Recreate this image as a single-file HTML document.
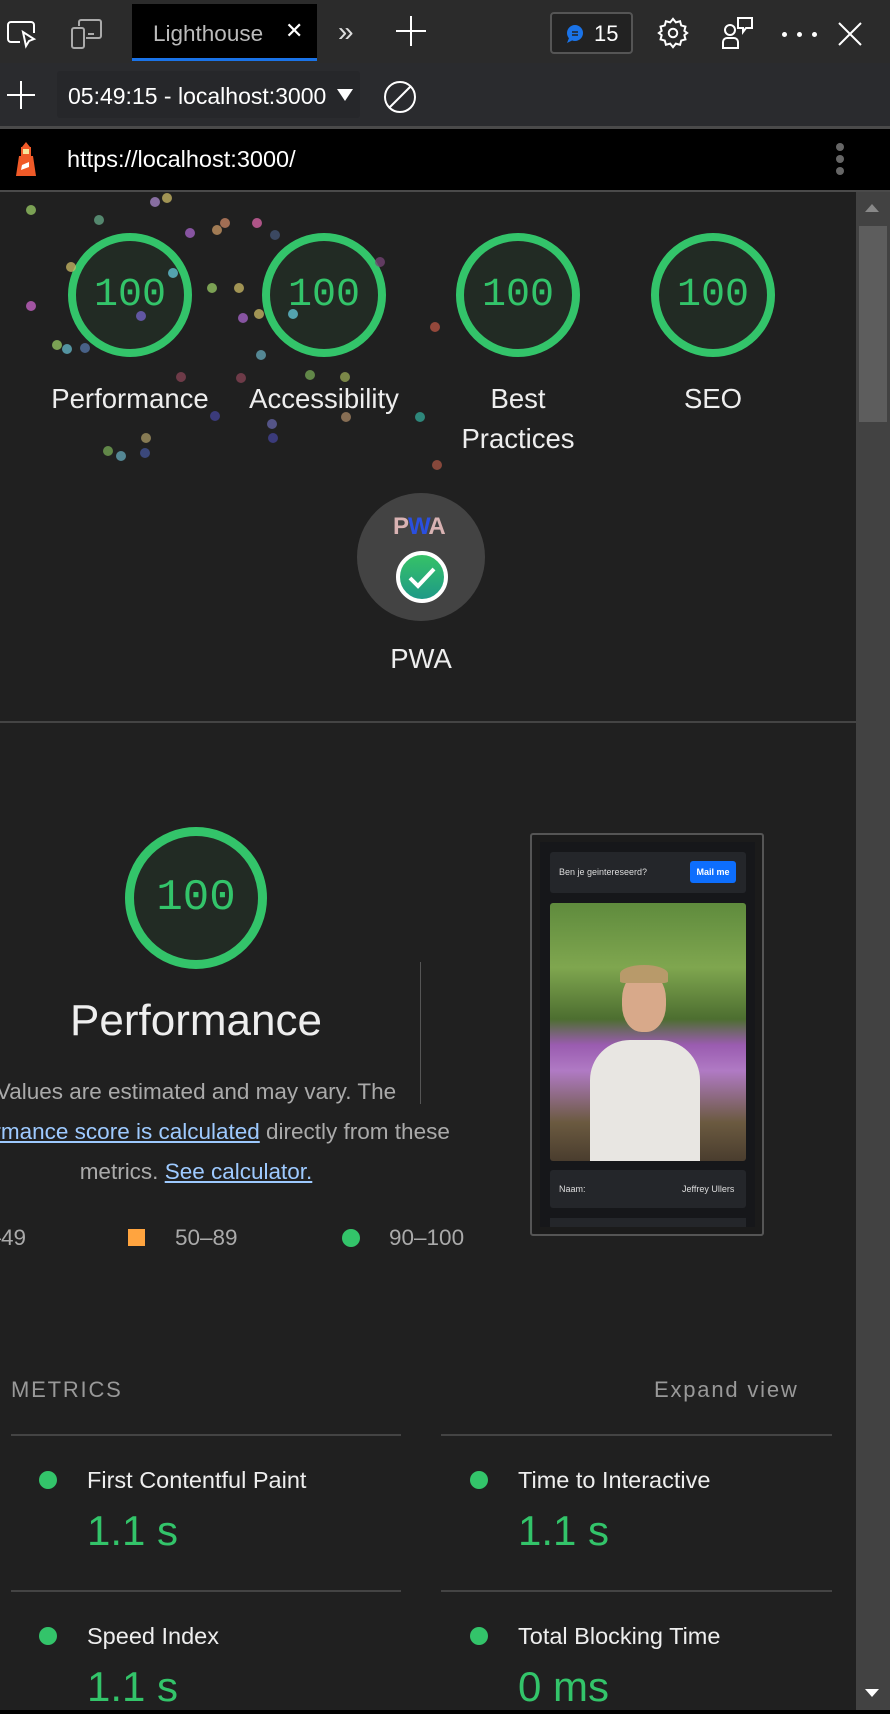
<!DOCTYPE html>
<html><head><meta charset="utf-8"><style>
*{margin:0;padding:0;box-sizing:border-box}
body{width:890px;height:1714px;background:#202020;font-family:"Liberation Sans",sans-serif;color:#fff;position:relative;overflow:hidden}
.a{position:absolute}
.lbl{position:absolute;font-size:27.5px;color:#eee;text-align:center;width:200px;line-height:40px}
.g{position:absolute;width:124px;height:124px;border:8px solid #33c46a;border-radius:50%;background:#222b24;color:#33c46a;font-family:"Liberation Mono",monospace;font-size:40px;display:flex;align-items:center;justify-content:center}
.dot{position:absolute;width:10px;height:10px;border-radius:50%;opacity:.75}
.ml{position:absolute;font-size:23.5px;color:#eee}
.mv{position:absolute;font-size:42px;color:#33c46a}
.md{position:absolute;width:18px;height:18px;border-radius:50%;background:#33c46a}
.hl{position:absolute;height:2px;background:#444}
</style></head><body>
<div class="a" style="left:0;top:0;width:890px;height:63px;background:#2b2b2b"></div>
<svg class="a" style="left:6px;top:20px" width="34" height="30" viewBox="0 0 34 30" fill="none" stroke="#fff" stroke-width="2"><path d="M14 22H5a3 3 0 0 1-3-3V5a3 3 0 0 1 3-3h20a3 3 0 0 1 3 3v8"/><path d="M17 12l3 14 3-5 5-2z"/></svg>
<svg class="a" style="left:70px;top:18px" width="36" height="34" viewBox="0 0 36 34" fill="none" stroke="#aaa" stroke-width="2"><rect x="2" y="10" width="12" height="20" rx="2"/><path d="M9 8V4a2 2 0 0 1 2-2h18a2 2 0 0 1 2 2v14a2 2 0 0 1-2 2h-13"/><path d="M18 16h6"/></svg>
<div class="a" style="left:132px;top:4px;width:185px;height:57px;background:#000"></div>
<div class="a" style="left:132px;top:58px;width:185px;height:3px;background:#1a73e8"></div>
<div class="a" style="left:153px;top:21px;font-size:22.5px;color:#bbb">Lighthouse</div>
<div class="a" style="left:285px;top:18px;font-size:22px;color:#fff">✕</div>
<div class="a" style="left:338px;top:16px;font-size:28px;color:#ddd">»</div>
<svg class="a" style="left:396px;top:16px" width="30" height="30"><path d="M15 0v30M0 15h30" stroke="#fff" stroke-width="2"/></svg>
<div class="a" style="left:550px;top:12px;width:83px;height:42px;border:2px solid #555;border-radius:4px;background:#222"></div>
<svg class="a" style="left:565px;top:24px" width="20" height="20"><circle cx="10" cy="9" r="8" fill="#1a73e8"/><path d="M4 14l-2 5 6-3z" fill="#1a73e8"/><path d="M7 8h6M7 11h6" stroke="#222" stroke-width="1.5"/></svg>
<div class="a" style="left:594px;top:21px;font-size:22px">15</div>
<svg class="a" style="left:656px;top:16px" width="34" height="34" viewBox="0 0 24 24" fill="none" stroke="#fff" stroke-width="1.4"><circle cx="12" cy="12" r="3"/><path d="M12 2l2 2.5 3-.8.8 3 3 .8-.8 3L22 12l-2 1.5.8 3-3 .8-.8 3-3-.8L12 22l-2-2.5-3 .8-.8-3-3-.8.8-3L2 12l2-1.5-.8-3 3-.8.8-3 3 .8z"/></svg>
<svg class="a" style="left:720px;top:16px" width="36" height="36" viewBox="0 0 36 36" fill="none" stroke="#fff" stroke-width="2"><circle cx="10" cy="14" r="5"/><path d="M3 32v-6a4 4 0 0 1 4-4h7a4 4 0 0 1 4 4v6z"/><path d="M18 2h14v10h-6l-3 4v-4h-5z"/></svg>
<div class="a" style="left:782px;top:32px;width:5px;height:5px;border-radius:50%;background:#fff"></div>
<div class="a" style="left:797px;top:32px;width:5px;height:5px;border-radius:50%;background:#fff"></div>
<div class="a" style="left:812px;top:32px;width:5px;height:5px;border-radius:50%;background:#fff"></div>
<svg class="a" style="left:838px;top:22px" width="24" height="24"><path d="M1 1l22 22M23 1L1 23" stroke="#fff" stroke-width="2"/></svg>
<div class="a" style="left:0;top:63px;width:890px;height:64px;background:#2a2b2e"></div>
<svg class="a" style="left:7px;top:81px" width="28" height="28"><path d="M14 0v28M0 14h28" stroke="#fff" stroke-width="2"/></svg>
<div class="a" style="left:57px;top:71px;width:303px;height:47px;background:#26272a;border-radius:3px"></div>
<div class="a" style="left:68px;top:83px;font-size:23px">05:49:15 - localhost:3000</div>
<div class="a" style="left:337px;top:89px;width:0;height:0;border-left:8px solid transparent;border-right:8px solid transparent;border-top:12px solid #fff"></div>
<svg class="a" style="left:383px;top:80px" width="34" height="34"><circle cx="17" cy="17" r="15" fill="none" stroke="#fff" stroke-width="2"/><path d="M7 27L27 7" stroke="#fff" stroke-width="2"/></svg>
<div class="a" style="left:0;top:126px;width:890px;height:3px;background:#4a4a4a"></div>
<div class="a" style="left:0;top:129px;width:890px;height:61px;background:#000"></div>
<svg class="a" style="left:13px;top:141px" width="26" height="36" viewBox="0 0 26 36"><path d="M13 1l4 5H9z" fill="#f05a28"/><rect x="8" y="6" width="10" height="9" fill="#f05a28"/><rect x="10" y="8" width="6" height="5" fill="#f7e59a"/><path d="M6 15h14l3 20H3z" fill="#f05a28"/><path d="M9 24l7-3v5l-8 3z" fill="#fff"/></svg>
<div class="a" style="left:67px;top:146px;font-size:23.5px">https://localhost:3000/</div>
<div class="a" style="left:836px;top:143px;width:8px;height:8px;border-radius:50%;background:#666"></div>
<div class="a" style="left:836px;top:155px;width:8px;height:8px;border-radius:50%;background:#666"></div>
<div class="a" style="left:836px;top:167px;width:8px;height:8px;border-radius:50%;background:#666"></div>
<div class="a" style="left:0;top:190px;width:890px;height:2px;background:#4a4a4a"></div>
<div class="a" style="left:856px;top:192px;width:34px;height:1518px;background:#424242"></div>
<div class="a" style="left:859px;top:226px;width:28px;height:196px;background:#5d5d5d"></div>
<div class="a" style="left:865px;top:204px;border-left:7px solid transparent;border-right:7px solid transparent;border-bottom:8px solid #888"></div>
<div class="a" style="left:865px;top:1689px;border-left:7px solid transparent;border-right:7px solid transparent;border-top:8px solid #fff"></div>
<div class="a" style="left:0;top:1710px;width:890px;height:4px;background:#000"></div>
<div class="g" style="left:68px;top:233px">100</div>
<div class="g" style="left:262px;top:233px">100</div>
<div class="g" style="left:456px;top:233px">100</div>
<div class="g" style="left:651px;top:233px">100</div>
<div class="lbl" style="left:30px;top:379px">Performance</div>
<div class="lbl" style="left:224px;top:379px">Accessibility</div>
<div class="lbl" style="left:418px;top:379px">Best<br>Practices</div>
<div class="lbl" style="left:613px;top:379px">SEO</div>
<div class="dot" style="left:26px;top:205px;background:#9c6"></div>
<div class="dot" style="left:94px;top:215px;background:#6a8"></div>
<div class="dot" style="left:150px;top:197px;background:#a8c"></div>
<div class="dot" style="left:162px;top:193px;background:#cb6"></div>
<div class="dot" style="left:185px;top:228px;background:#a6c"></div>
<div class="dot" style="left:212px;top:225px;background:#c96"></div>
<div class="dot" style="left:220px;top:218px;background:#c86"></div>
<div class="dot" style="left:252px;top:218px;background:#d6a"></div>
<div class="dot" style="left:270px;top:230px;background:#457"></div>
<div class="dot" style="left:66px;top:262px;background:#cb6"></div>
<div class="dot" style="left:168px;top:268px;background:#6cd"></div>
<div class="dot" style="left:207px;top:283px;background:#9c6"></div>
<div class="dot" style="left:234px;top:283px;background:#cb6"></div>
<div class="dot" style="left:26px;top:301px;background:#c6c"></div>
<div class="dot" style="left:136px;top:311px;background:#76c"></div>
<div class="dot" style="left:238px;top:313px;background:#a6c"></div>
<div class="dot" style="left:254px;top:309px;background:#cb6"></div>
<div class="dot" style="left:288px;top:309px;background:#6cd"></div>
<div class="dot" style="left:375px;top:257px;background:#747"></div>
<div class="dot" style="left:52px;top:340px;background:#9c6"></div>
<div class="dot" style="left:62px;top:344px;background:#6bc"></div>
<div class="dot" style="left:80px;top:343px;background:#57a"></div>
<div class="dot" style="left:430px;top:322px;background:#b54"></div>
<div class="dot" style="left:256px;top:350px;background:#6ab"></div>
<div class="dot" style="left:176px;top:372px;background:#845"></div>
<div class="dot" style="left:236px;top:373px;background:#845"></div>
<div class="dot" style="left:305px;top:370px;background:#7a5"></div>
<div class="dot" style="left:340px;top:372px;background:#9a5"></div>
<div class="dot" style="left:210px;top:411px;background:#449"></div>
<div class="dot" style="left:267px;top:419px;background:#66a"></div>
<div class="dot" style="left:341px;top:412px;background:#a86"></div>
<div class="dot" style="left:415px;top:412px;background:#3a9"></div>
<div class="dot" style="left:141px;top:433px;background:#a96"></div>
<div class="dot" style="left:268px;top:433px;background:#449"></div>
<div class="dot" style="left:103px;top:446px;background:#7a5"></div>
<div class="dot" style="left:116px;top:451px;background:#6ab"></div>
<div class="dot" style="left:140px;top:448px;background:#459"></div>
<div class="dot" style="left:432px;top:460px;background:#a54"></div>
<div class="a" style="left:357px;top:493px;width:128px;height:128px;border-radius:50%;background:#434343"></div>
<div class="a" style="left:393px;top:513px;font-size:24px;font-weight:bold;letter-spacing:-1px"><span style="color:#d9b3b3">P</span><span style="color:#2a4fe0">W</span><span style="color:#d9b3b3">A</span></div>
<div class="a" style="left:396px;top:551px;width:52px;height:52px;border-radius:50%;background:linear-gradient(#36c267,#1e9a87);border:4px solid #fff"></div>
<svg class="a" style="left:396px;top:551px" width="52" height="52"><path d="M14 27l8 8 16-17" fill="none" stroke="#fff" stroke-width="4"/></svg>
<div class="lbl" style="left:321px;top:639px">PWA</div>
<div class="hl" style="left:0;top:721px;width:856px"></div>
<div class="a" style="left:125px;top:827px;width:142px;height:142px;border:9px solid #33c46a;border-radius:50%;background:#222b24;color:#33c46a;font-family:'Liberation Mono',monospace;font-size:44px;display:flex;align-items:center;justify-content:center">100</div>
<div class="a" style="left:0;top:996px;width:392px;text-align:center;font-size:44px;color:#eee">Performance</div>
<div class="a" style="left:420px;top:962px;width:1px;height:142px;background:#555"></div>
<div class="a" style="left:-110px;top:1072px;width:612px;text-align:center;font-size:22.5px;color:#aaa;line-height:40px;white-space:nowrap">Values are estimated and may vary. The<br><span style="color:#9ecaff;text-decoration:underline">performance score is calculated</span> directly from these<br>metrics. <span style="color:#9ecaff;text-decoration:underline">See calculator.</span></div>
<div class="a" style="left:-24px;top:1225px;font-size:22.5px;color:#aaa">0–49</div>
<div class="a" style="left:128px;top:1229px;width:17px;height:17px;background:#ffa43f"></div>
<div class="a" style="left:175px;top:1225px;font-size:22.5px;color:#aaa">50–89</div>
<div class="a" style="left:342px;top:1229px;width:18px;height:18px;border-radius:50%;background:#33c46a"></div>
<div class="a" style="left:389px;top:1225px;font-size:22.5px;color:#aaa">90–100</div>
<div class="a" style="left:530px;top:833px;width:234px;height:403px;border:2px solid #555;border-radius:3px;background:#1b1b1b"></div>
<div class="a" style="left:540px;top:842px;width:215px;height:385px;background:#16171a"></div>
<div class="a" style="left:550px;top:852px;width:196px;height:41px;background:#24262a;border-radius:3px"></div>
<div class="a" style="left:559px;top:867px;font-size:9px;color:#ddd">Ben je geintereseerd?</div>
<div class="a" style="left:690px;top:861px;width:46px;height:22px;background:#0d6efd;border-radius:3px;font-size:9px;font-weight:bold;text-align:center;line-height:22px">Mail me</div>
<div class="a" style="left:550px;top:903px;width:196px;height:258px;border-radius:3px;background:linear-gradient(#5f8b3d 0%,#7fa64f 25%,#4d6e30 45%,#9a5cb0 55%,#b07ac4 65%,#6b5a40 85%,#4a3d2e 100%)"></div>
<div class="a" style="left:590px;top:1040px;width:110px;height:121px;border-radius:40px 40px 0 0;background:#e8e6e2"></div>
<div class="a" style="left:622px;top:972px;width:44px;height:60px;border-radius:45%;background:#d8a98a"></div>
<div class="a" style="left:620px;top:965px;width:48px;height:18px;border-radius:50% 50% 10% 10%;background:#b89a6a"></div>
<div class="a" style="left:550px;top:1170px;width:196px;height:38px;background:#24262a;border-radius:3px"></div>
<div class="a" style="left:559px;top:1184px;font-size:9px;color:#ddd">Naam:</div>
<div class="a" style="left:682px;top:1184px;font-size:9px;color:#ddd">Jeffrey Ullers</div>
<div class="a" style="left:550px;top:1218px;width:196px;height:9px;background:#24262a"></div>
<div class="a" style="left:11px;top:1377px;font-size:22px;color:#999;letter-spacing:1.8px">METRICS</div>
<div class="a" style="left:654px;top:1377px;font-size:22px;color:#999;letter-spacing:1.8px">Expand view</div>
<div class="hl" style="left:11px;top:1434px;width:390px"></div>
<div class="hl" style="left:441px;top:1434px;width:391px"></div>
<div class="hl" style="left:11px;top:1590px;width:390px"></div>
<div class="hl" style="left:441px;top:1590px;width:391px"></div>
<div class="md" style="left:39px;top:1471px"></div>
<div class="ml" style="left:87px;top:1467px">First Contentful Paint</div>
<div class="mv" style="left:87px;top:1507px">1.1 s</div>
<div class="md" style="left:470px;top:1471px"></div>
<div class="ml" style="left:518px;top:1467px">Time to Interactive</div>
<div class="mv" style="left:518px;top:1507px">1.1 s</div>
<div class="md" style="left:39px;top:1627px"></div>
<div class="ml" style="left:87px;top:1623px">Speed Index</div>
<div class="mv" style="left:87px;top:1663px">1.1 s</div>
<div class="md" style="left:470px;top:1627px"></div>
<div class="ml" style="left:518px;top:1623px">Total Blocking Time</div>
<div class="mv" style="left:518px;top:1663px">0 ms</div>
</body></html>
